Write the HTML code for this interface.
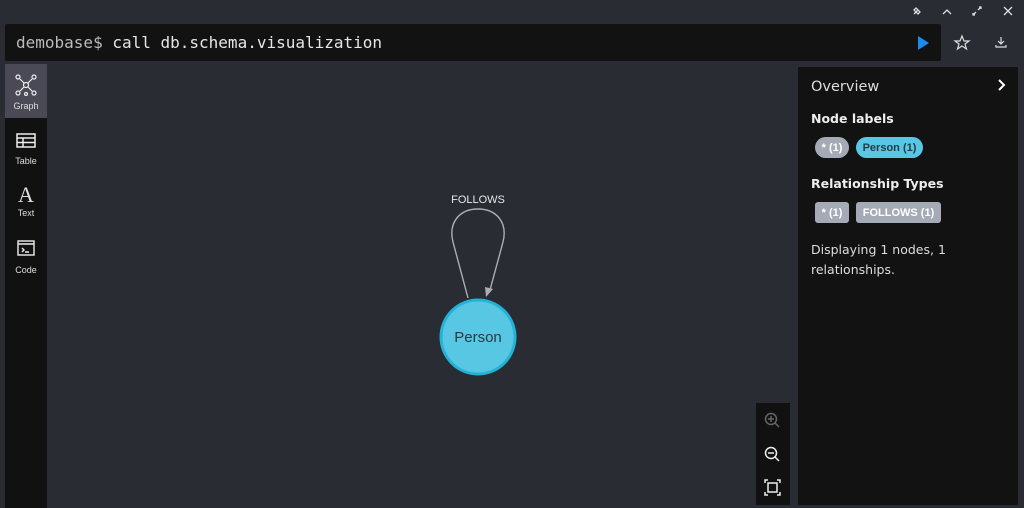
<!DOCTYPE html>
<html><head><style>
body{margin:0;width:1024px;height:508px;background:#292c33;font-family:"Liberation Sans",sans-serif;position:relative;overflow:hidden;color:#ddd}
.ab{position:absolute}
.editor{left:5px;top:24px;width:936px;height:37px;background:#121212;border-radius:2px}
.editor span{position:absolute;left:11px;top:9px;font-family:"DejaVu Sans Mono","Liberation Mono",monospace;font-size:16px;color:#e6e6e6}
.side{left:5px;top:64px;width:42px;height:444px;background:#111}
.tab{position:absolute;left:0;width:42px;text-align:center;font-size:9px;color:#ddd}
.panel{left:798px;top:67px;width:220px;height:438px;background:#121212;font-family:"DejaVu Sans","Liberation Sans",sans-serif}
.pill{position:absolute;font-family:"Liberation Sans",sans-serif;font-weight:bold;font-size:11px;height:21px;line-height:22px;text-align:center}
</style></head><body>
<svg class="ab" style="left:0;top:0" width="1024" height="24">
<g stroke="#ddd" stroke-width="1.3" fill="none">
<path d="M914 14l4-4M916 8l4 4-2 2-4-4z"/>
<path d="M943 14l4-4 4 4"/>
<path d="M973 15l3-3M981 7l-3 3M979 7h2v2M973 13v2h2"/>
<path d="M1004 7l8 8M1012 7l-8 8"/>
</g></svg>
<div class="ab editor"><span><span style="position:static;color:#bbb">demobase$</span> call db.schema.visualization</span></div>
<svg class="ab" style="left:905px;top:30px" width="115" height="26">
<path d="M13 6v14l11-7z" fill="#1a8cf0"/>
<path d="M57 6l2 5h5l-4 3 1.5 5-4.5-3-4.5 3 1.5-5-4-3h5z" fill="none" stroke="#ddd" stroke-width="1.2"/>
<path d="M96 7v7M93 11l3 3 3-3M91 15v2h10v-2" fill="none" stroke="#ddd" stroke-width="1.2"/>
</svg>
<div class="ab side">
<div class="tab" style="top:0;height:54px;background:#4a4a56"></div>
<svg class="ab" style="left:10px;top:10px" width="22" height="22" fill="none" stroke="#eee" stroke-width="1.2">
<circle cx="11" cy="11" r="2.5"/><circle cx="3" cy="3" r="2"/><circle cx="19" cy="3" r="2"/><circle cx="3" cy="19" r="2"/><circle cx="19" cy="19" r="2"/><circle cx="11" cy="20" r="1.5"/>
<path d="M5 5l4 4M17 5l-4 4M5 17l4-4M17 17l-4-4"/></svg>
<div class="tab" style="top:37px">Graph</div>
<svg class="ab" style="left:11px;top:69px" width="20" height="16" fill="none" stroke="#eee" stroke-width="1.5">
<rect x="1" y="1" width="18" height="13"/><path d="M1 5h18M1 9.5h18M7 5v9"/></svg>
<div class="tab" style="top:92px">Table</div>
<div class="tab" style="top:118px;font-family:'Liberation Serif',serif;font-size:22px">A</div>
<div class="tab" style="top:144px">Text</div>
<svg class="ab" style="left:12px;top:176px" width="18" height="16" fill="none" stroke="#eee" stroke-width="1.4">
<rect x="1" y="1" width="16" height="14"/><path d="M1 4h16M5 8l2 2-2 2M8 12h4"/></svg>
<div class="tab" style="top:201px">Code</div>
</div>
<svg class="ab" style="left:420px;top:180px" width="120" height="200">
<text x="58" y="23" fill="#e8e8e8" font-size="11" text-anchor="middle" font-family="Liberation Sans">FOLLOWS</text>
<path d="M48 118 L33 62 C28 42 40 29 58 29 C76 29 88 42 83 62 L70 110" fill="none" stroke="#a9adb4" stroke-width="1.4"/>
<path d="M66 117l-1-10 8 2z" fill="#a9adb4"/>
<circle cx="58" cy="157" r="37" fill="#57c7e3" stroke="#23b3d7" stroke-width="3"/>
<text x="58" y="162" fill="#2a3a44" font-size="15" text-anchor="middle" font-family="Liberation Sans">Person</text>
</svg>
<div class="ab" style="left:756px;top:403px;width:34px;height:102px;background:#111"></div>
<svg class="ab" style="left:756px;top:403px" width="34" height="102" fill="none" stroke-width="1.5">
<g stroke="#666"><circle cx="15" cy="16" r="5.5"/><path d="M19 20l4 4M15 13v6M12 16h6"/></g>
<g stroke="#eee"><circle cx="15" cy="50" r="5.5"/><path d="M19 54l4 4M12 50h6"/>
<path d="M9 80v-3h3M21 77h3v3M24 89v3h-3M12 92h-3v-3"/><rect x="12" y="80" width="9" height="9"/></g>
</svg>
<div class="ab panel">
<div class="ab" style="left:13px;top:12px;font-size:14.5px;color:#ddd">Overview</div>
<svg class="ab" style="left:198px;top:11px" width="12" height="14"><path d="M3 2l5 5-5 5" fill="none" stroke="#fff" stroke-width="2"/></svg>
<div class="ab" style="left:13px;top:44px;font-size:12.5px;font-weight:bold;color:#eee">Node labels</div>
<div class="pill" style="left:17px;top:70px;width:34px;border-radius:11px;background:#a5abb6;color:#fff">* (1)</div>
<div class="pill" style="left:58px;top:70px;width:67px;border-radius:11px;background:#57c7e3;color:#2a3a44">Person (1)</div>
<div class="ab" style="left:13px;top:109px;font-size:12.5px;font-weight:bold;color:#eee">Relationship Types</div>
<div class="pill" style="left:17px;top:135px;width:34px;border-radius:3px;background:#a5abb6;color:#fff">* (1)</div>
<div class="pill" style="left:58px;top:135px;width:85px;border-radius:3px;background:#a5abb6;color:#fff">FOLLOWS (1)</div>
<div class="ab" style="left:13px;top:173px;font-size:12.5px;line-height:20px;color:#ddd;width:200px">Displaying 1 nodes, 1 relationships.</div>
</div>
</body></html>
